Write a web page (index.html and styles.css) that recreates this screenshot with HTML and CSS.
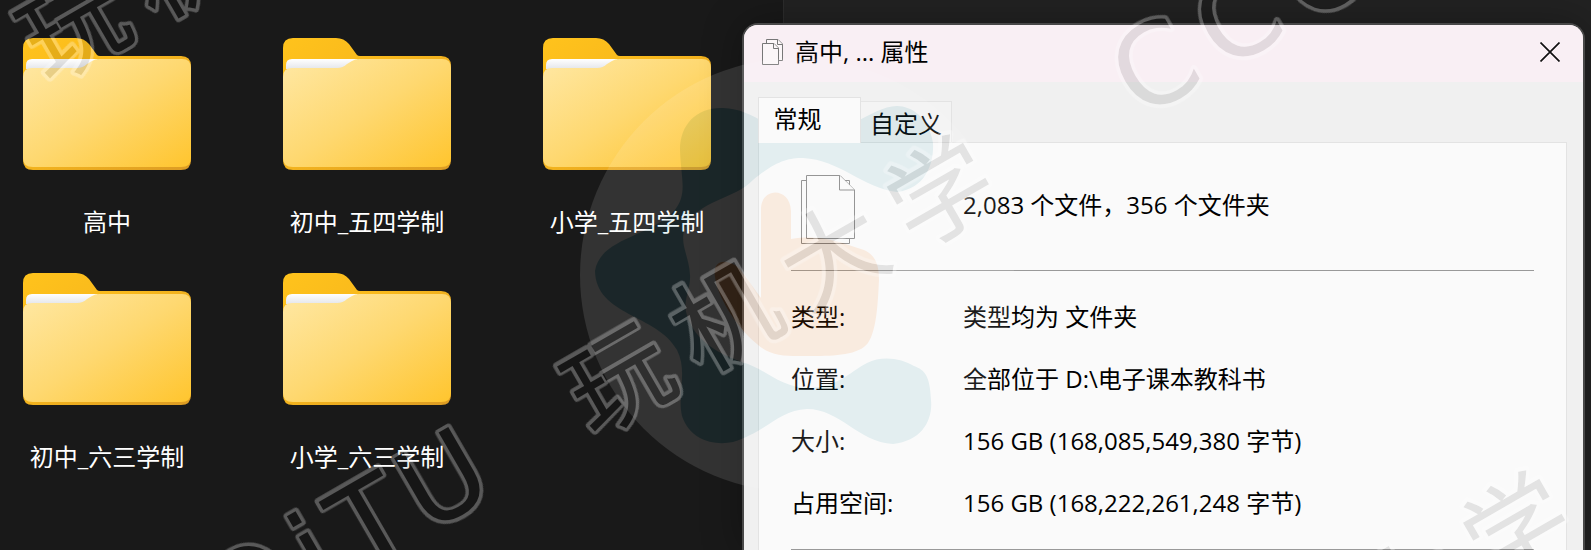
FILE: index.html
```html
<!DOCTYPE html>
<html lang="zh-CN">
<head>
<meta charset="utf-8">
<title>高中, ... 属性</title>
<link rel="stylesheet" href="styles.css">
</head>
<body>
<svg class="defs" aria-hidden="true">
  <defs>
    <linearGradient id="back" x1="0" y1="0" x2="1" y2="1">
      <stop offset="0" stop-color="#ffc31c"/><stop offset="0.4" stop-color="#f8b81c"/><stop offset="1" stop-color="#dc9c24"/>
    </linearGradient>
    <linearGradient id="front" x1="0" y1="0" x2="1" y2="1">
      <stop offset="0" stop-color="#ffe8a4"/><stop offset="0.5" stop-color="#fed870"/><stop offset="1" stop-color="#ffc52e"/>
    </linearGradient>
    <linearGradient id="paper" x1="0" y1="0" x2="0" y2="1">
      <stop offset="0" stop-color="#ffffff"/><stop offset="1" stop-color="#dcdee4"/>
    </linearGradient>
    <symbol id="folder" viewBox="0 0 168 132">
      <path fill="url(#back)" d="M0 10Q0 0 10 0H53Q61 0 66 6L74 17Q75 18 77 18H158Q168 18 168 28V122Q168 132 158 132H10Q0 132 0 122Z"/>
      <path fill="url(#paper)" d="M3 34V27Q3 21 9 21H75L64 31H3Z"/>
      <path fill="url(#front)" d="M0 39Q0 30 9 30H54Q60 30 64 26L69 23Q72 21 76 21H159Q168 21 168 30V120Q168 129 158 129H10Q0 129 0 120Z"/>
    </symbol>
  </defs>
</svg>

<div class="desktop">
  <main class="explorer">
    <ul class="folders">
      <li><a class="folder" href="#"><svg class="folder-icon" aria-hidden="true"><use href="#folder"/></svg><span>高中</span></a></li>
      <li><a class="folder" href="#"><svg class="folder-icon" aria-hidden="true"><use href="#folder"/></svg><span>初中_五四学制</span></a></li>
      <li><a class="folder" href="#"><svg class="folder-icon" aria-hidden="true"><use href="#folder"/></svg><span>小学_五四学制</span></a></li>
      <li><a class="folder" href="#"><svg class="folder-icon" aria-hidden="true"><use href="#folder"/></svg><span>初中_六三学制</span></a></li>
      <li><a class="folder" href="#"><svg class="folder-icon" aria-hidden="true"><use href="#folder"/></svg><span>小学_六三学制</span></a></li>
    </ul>
  </main>

  <section class="dialog" role="dialog" aria-labelledby="dialog-title">
    <header class="titlebar">
      <svg class="title-icon" viewBox="0 0 22 26" fill="#fbf6f8" stroke="#777" aria-hidden="true">
        <path d="M4.500.5H16L20.500 5V21.500H4.500Z"/><path d="M15.500.5V5.500H20.500"/>
        <path d="M.5 4.500H12L16.500 9V25.500H.5Z"/><path d="M11.500 4.500V9.500H16.500"/>
      </svg>
      <h1 id="dialog-title">高中, ... 属性</h1>
      <button class="close" type="button" aria-label="关闭">
        <svg viewBox="0 0 20 20" stroke="#111" stroke-width="1.700" aria-hidden="true"><path d="M.5.5 19.500 19.500M19.500.5.5 19.500"/></svg>
      </button>
    </header>
    <div class="content">
      <div class="tabs" role="tablist">
        <button class="tab selected" type="button" role="tab" aria-selected="true">常规</button>
        <button class="tab" type="button" role="tab" aria-selected="false">自定义</button>
      </div>
      <div class="panel" role="tabpanel">
        <div class="summary">
          <svg class="files-icon" viewBox="0 0 54 70" fill="#fafafa" stroke="#888" aria-hidden="true">
            <path d="M.5 5.500H48.500V68.500H.5Z"/>
            <path d="M5.500.5H39L53.500 15V63.500H5.500Z"/><path d="M38.500.5V15H53.500"/>
          </svg>
          <p>2,083 个文件，356 个文件夹</p>
        </div>
        <dl class="details">
          <dt>类型:</dt><dd>类型均为 文件夹</dd>
          <dt>位置:</dt><dd>全部位于 D:\电子课本教科书</dd>
          <dt>大小:</dt><dd>156 GB (168,085,549,380 字节)</dd>
          <dt>占用空间:</dt><dd>156 GB (168,222,261,248 字节)</dd>
        </dl>
      </div>
    </div>
  </section>

  <svg class="watermark" width="1591" height="550" viewBox="0 0 1591 550" aria-hidden="true">
    <defs>
      <g id="marks">
        <g transform="translate(618 378) rotate(-30)"><text class="mark-cjk" x="0 124 248 372" y="39">玩机大学</text></g>
        <g transform="translate(73 25) rotate(-30)"><text class="mark-cjk" x="0 124" y="39">玩机</text></g>
        <g transform="translate(1409 590) rotate(-30)"><text class="mark-cjk" x="0 124" y="39">大学</text></g>
        <g transform="translate(1153 64) rotate(-30)"><text class="mark-latin" x="0 96 196" y="42">CCO</text></g>
        <g transform="translate(441 477) rotate(-30)"><text class="mark-latin" x="-220 -148 -84 0" y="42">OiTU</text></g>
      </g>
      <mask id="outside" maskUnits="userSpaceOnUse" x="0" y="0" width="1591" height="550">
        <rect width="1591" height="550" fill="#fff"/>
        <use href="#marks" fill="#000"/>
      </mask>
    </defs>
    <g opacity="0.11">
      <circle cx="797" cy="275" r="217" fill="#fff"/>
      <path fill="#3194a8" d="M723 108C697 107 680 124 680 150C681 180 688 194 674 211C650 237 600 238 595 271C596 316 657 314 677 350C688 372 677 394 682 416C690 440 714 446 733 442C768 431 779 410 807 409C840 409 858 442 893 444C922 441 933 420 931 400C930 376 925 370 914 366C902 359 883 355 867 363C852 370 842 385 812 388C780 389 767 369 742 362C712 351 696 339 688 318C681 302 691 290 690 275C689 255 679 244 685 228C697 200 734 200 753 180C776 161 788 158 803 158C840 160 863 188 897 192C927 188 934 162 933 143C929 117 911 106 897 106C870 107 845 137 807 138C775 138 758 109 723 108Z"/>
      <path fill="#f97814" d="M761 208C762 187 790 187 791 211V239C820 234 840 242 864 250C878 256 879 270 879 280C878 300 877 330 868 343C859 355 835 356 812 356C790 356 772 358 757 344C735 326 717 295 715 277C712 259 727 258 740 269L761 298Z"/>
    </g>
    <use href="#marks" fill="#000" fill-opacity="0.09"/>
    <g mask="url(#outside)"><use href="#marks" fill="none" stroke="#fff" stroke-opacity="0.28" stroke-width="7" stroke-linejoin="round"/></g>
  </svg>
</div>
</body>
</html>
```

FILE: styles.css
```css
* {
  box-sizing: border-box;
}

body {
  margin: 0;
  background: #191919;
  color: #000;
  font: 24px/32px "Open Sans", "Noto Sans CJK SC", sans-serif;
}

h1, p, dl, dd, ul {
  margin: 0;
  padding: 0;
}

button {
  padding: 0;
  border: 0;
  background: none;
  color: inherit;
  font: inherit;
}

.defs {
  position: absolute;
  width: 0;
  height: 0;
}

.desktop {
  position: relative;
  display: flex;
  min-height: 100vh;
  overflow: hidden;
  background: linear-gradient(90deg, #191919 783px, #2c2c2c 783px, #2c2c2c 784px, #222 784px);
}

.explorer {
  flex: 0 0 742px;
  padding-top: 38px;
}

.folders {
  display: grid;
  grid-template-columns: repeat(3, 214px);
  gap: 35px 46px;
  list-style: none;
}

.folder {
  display: flex;
  flex-direction: column;
  align-items: center;
  gap: 36px;
  color: #fff;
  text-decoration: none;
}

.folder-icon {
  width: 168px;
  height: 132px;
}

.dialog {
  display: flex;
  flex: 1;
  flex-direction: column;
  margin: 23px 6px 0 0;
  overflow: hidden;
  border: 2px solid #484848;
  border-bottom: 0;
  border-radius: 16px 16px 0 0;
  background: #f0f0f0;
  box-shadow: 0 0 40px rgba(0, 0, 0, 0.3);
}

.titlebar {
  display: flex;
  align-items: center;
  gap: 11px;
  height: 57px;
  padding: 0 23px 4px 18px;
  background: #f9eff4;
}

.titlebar h1 {
  font-size: 24px;
  font-weight: 400;
}

.title-icon {
  width: 22px;
  height: 26px;
}

.close {
  display: flex;
  margin-left: auto;
}

.close svg {
  width: 20px;
  height: 20px;
}

.content {
  display: flex;
  flex: 1;
  flex-direction: column;
  padding: 15px 16px 0 14px;
}

.tabs {
  display: flex;
  align-items: flex-end;
}

.tab {
  height: 41px;
  padding: 3px 9px 0;
  border: 1px solid #e3e3e3;
  border-bottom: 0;
  border-left: 0;
  background: #f3f3f3;
}

.tab.selected {
  z-index: 1;
  width: 103px;
  height: 46px;
  margin-bottom: -1px;
  padding: 0 38px 4px 14px;
  border-left: 1px solid #e3e3e3;
  background: #fafafa;
}

.panel {
  flex: 1;
  padding: 32px 32px 0 32px;
  border: 1px solid #e3e3e3;
  border-bottom: 0;
  background: #fafafa;
}

.summary {
  display: grid;
  grid-template-columns: 162px 1fr;
  gap: 10px;
  padding-bottom: 25px;
  border-bottom: 1px solid #999;
}

.summary p {
  padding-top: 14px;
}

.files-icon {
  width: 54px;
  height: 70px;
  margin-left: 10px;
}

.details {
  display: grid;
  grid-template-columns: 162px 1fr;
  gap: 30px 10px;
  padding: 30px 0;
  border-bottom: 2px solid #999;
}

.watermark {
  position: absolute;
  top: 0;
  left: 0;
  pointer-events: none;
}

.mark-cjk {
  font: 104px "Noto Sans CJK SC", sans-serif;
  text-anchor: middle;
}

.mark-latin {
  font: 112px "DejaVu Sans", sans-serif;
  text-anchor: middle;
}
```
